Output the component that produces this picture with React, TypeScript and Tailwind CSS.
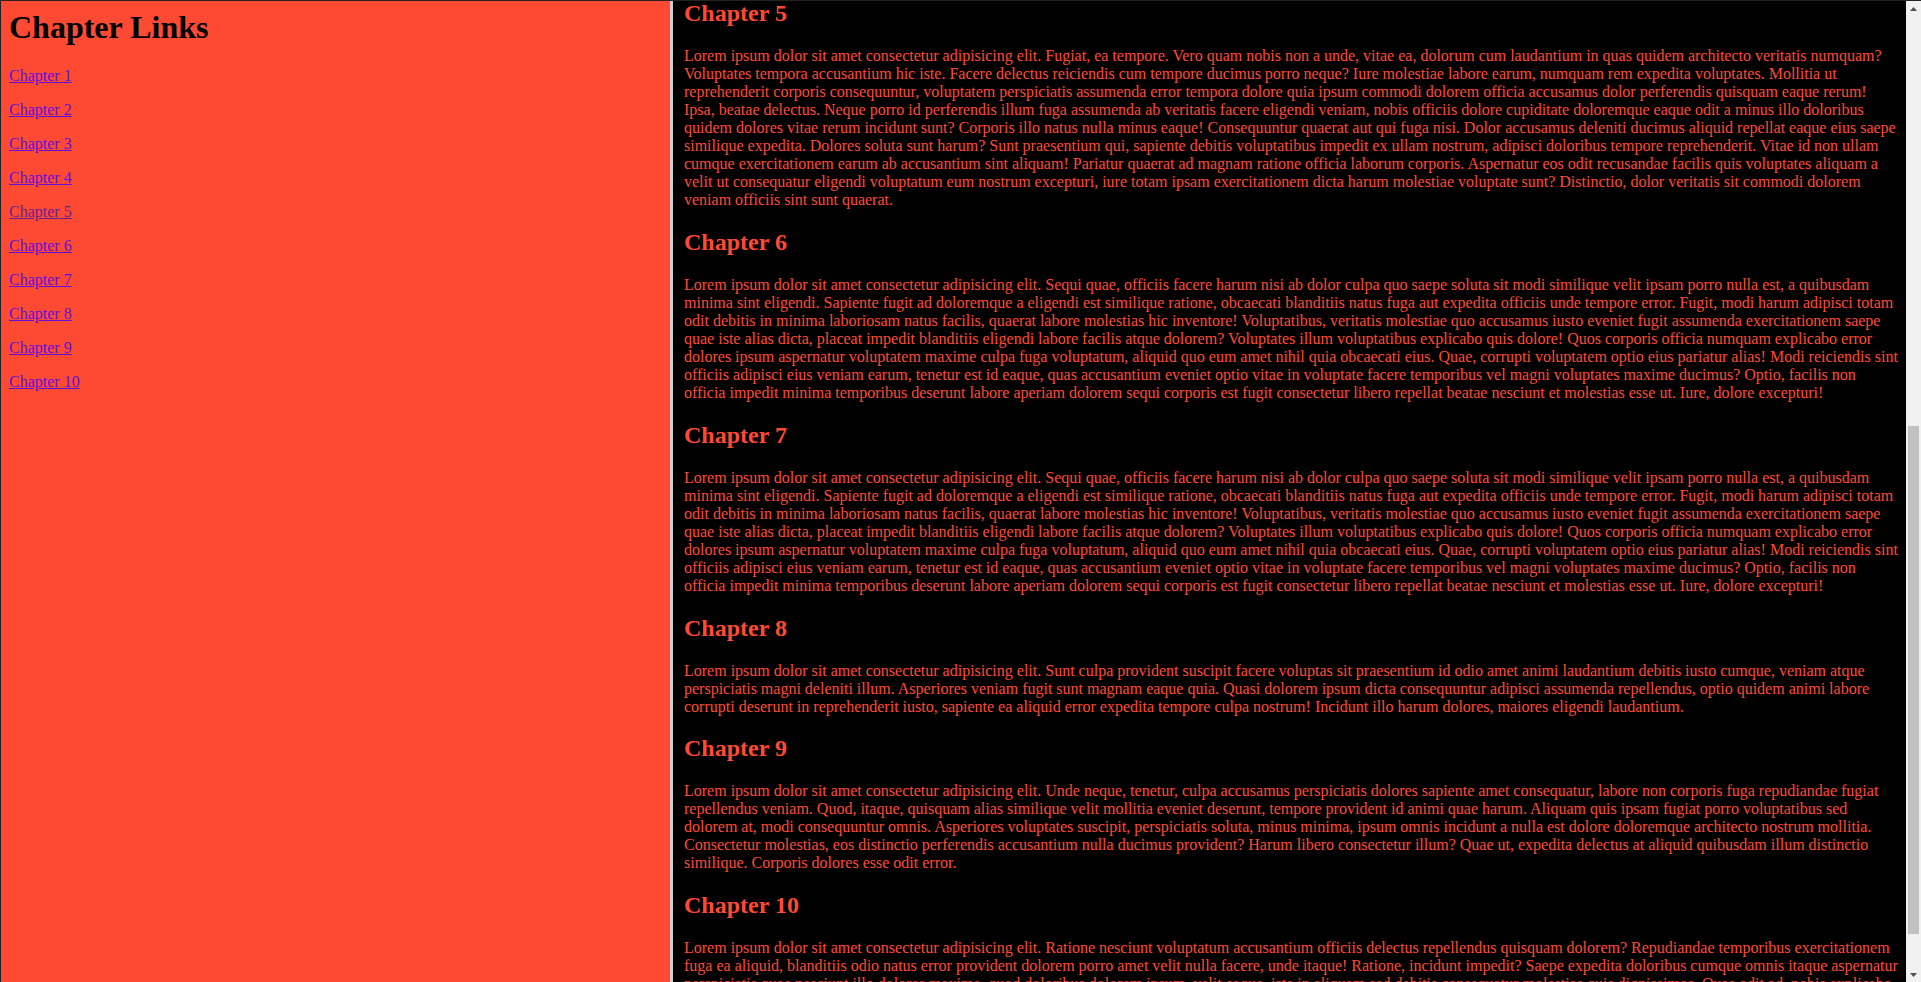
import { useEffect, useRef, useState } from 'react'

const textA =
  'Lorem ipsum dolor sit amet consectetur adipisicing elit. Fugiat, ea tempore. Vero quam nobis non a unde, vitae ea, dolorum cum laudantium in quas quidem architecto veritatis numquam? Voluptates tempora accusantium hic iste. Facere delectus reiciendis cum tempore ducimus porro neque? Iure molestiae labore earum, numquam rem expedita voluptates. Mollitia ut reprehenderit corporis consequuntur, voluptatem perspiciatis assumenda error tempora dolore quia ipsum commodi dolorem officia accusamus dolor perferendis quisquam eaque rerum! Ipsa, beatae delectus. Neque porro id perferendis illum fuga assumenda ab veritatis facere eligendi veniam, nobis officiis dolore cupiditate doloremque eaque odit a minus illo doloribus quidem dolores vitae rerum incidunt sunt? Corporis illo natus nulla minus eaque! Consequuntur quaerat aut qui fuga nisi. Dolor accusamus deleniti ducimus aliquid repellat eaque eius saepe similique expedita. Dolores soluta sunt harum? Sunt praesentium qui, sapiente debitis voluptatibus impedit ex ullam nostrum, adipisci doloribus tempore reprehenderit. Vitae id non ullam cumque exercitationem earum ab accusantium sint aliquam! Pariatur quaerat ad magnam ratione officia laborum corporis. Aspernatur eos odit recusandae facilis quis voluptates aliquam a velit ut consequatur eligendi voluptatum eum nostrum excepturi, iure totam ipsam exercitationem dicta harum molestiae voluptate sunt? Distinctio, dolor veritatis sit commodi dolorem veniam officiis sint sunt quaerat.'

const textB =
  'Lorem ipsum dolor sit amet consectetur adipisicing elit. Sequi quae, officiis facere harum nisi ab dolor culpa quo saepe soluta sit modi similique velit ipsam porro nulla est, a quibusdam minima sint eligendi. Sapiente fugit ad doloremque a eligendi est similique ratione, obcaecati blanditiis natus fuga aut expedita officiis unde tempore error. Fugit, modi harum adipisci totam odit debitis in minima laboriosam natus facilis, quaerat labore molestias hic inventore! Voluptatibus, veritatis molestiae quo accusamus iusto eveniet fugit assumenda exercitationem saepe quae iste alias dicta, placeat impedit blanditiis eligendi labore facilis atque dolorem? Voluptates illum voluptatibus explicabo quis dolore! Quos corporis officia numquam explicabo error dolores ipsum aspernatur voluptatem maxime culpa fuga voluptatum, aliquid quo eum amet nihil quia obcaecati eius. Quae, corrupti voluptatem optio eius pariatur alias! Modi reiciendis sint officiis adipisci eius veniam earum, tenetur est id eaque, quas accusantium eveniet optio vitae in voluptate facere temporibus vel magni voluptates maxime ducimus? Optio, facilis non officia impedit minima temporibus deserunt labore aperiam dolorem sequi corporis est fugit consectetur libero repellat beatae nesciunt et molestias esse ut. Iure, dolore excepturi!'

const textC =
  'Lorem ipsum dolor sit amet consectetur adipisicing elit. Sunt culpa provident suscipit facere voluptas sit praesentium id odio amet animi laudantium debitis iusto cumque, veniam atque perspiciatis magni deleniti illum. Asperiores veniam fugit sunt magnam eaque quia. Quasi dolorem ipsum dicta consequuntur adipisci assumenda repellendus, optio quidem animi labore corrupti deserunt in reprehenderit iusto, sapiente ea aliquid error expedita tempore culpa nostrum! Incidunt illo harum dolores, maiores eligendi laudantium.'

const textD =
  'Lorem ipsum dolor sit amet consectetur adipisicing elit. Unde neque, tenetur, culpa accusamus perspiciatis dolores sapiente amet consequatur, labore non corporis fuga repudiandae fugiat repellendus veniam. Quod, itaque, quisquam alias similique velit mollitia eveniet deserunt, tempore provident id animi quae harum. Aliquam quis ipsam fugiat porro voluptatibus sed dolorem at, modi consequuntur omnis. Asperiores voluptates suscipit, perspiciatis soluta, minus minima, ipsum omnis incidunt a nulla est dolore doloremque architecto nostrum mollitia. Consectetur molestias, eos distinctio perferendis accusantium nulla ducimus provident? Harum libero consectetur illum? Quae ut, expedita delectus at aliquid quibusdam illum distinctio similique. Corporis dolores esse odit error.'

const textE =
  'Lorem ipsum dolor sit amet consectetur adipisicing elit. Ratione nesciunt voluptatum accusantium officiis delectus repellendus quisquam dolorem? Repudiandae temporibus exercitationem fuga ea aliquid, blanditiis odio natus error provident dolorem porro amet velit nulla facere, unde itaque! Ratione, incidunt impedit? Saepe expedita doloribus cumque omnis itaque aspernatur perspiciatis quae nesciunt illo dolores maxime, quod doloribus dolorem ipsum, velit eaque, iste in aliquam sed debitis consequatur molestias quis dignissimos. Quas odit ad, nobis explicabo voluptatem assumenda tempore ipsa minus sint dolorum repellat officiis architecto laudantium porro itaque consequatur, rem enim quo. Nostrum harum ducimus, eveniet voluptates delectus sit iure fugiat rem quam recusandae soluta reprehenderit cupiditate.'

const chapters = [textA, textB, textB, textD, textA, textB, textB, textC, textD, textE]

function Arrow({ down }: { down?: boolean }) {
  return (
    <div className="flex h-[15px] items-center justify-center">
      <svg width="7" height="4" viewBox="0 0 7 4" className={down ? 'rotate-180' : ''}>
        <polygon points="3.5,0 7,4 0,4" fill="#505050" />
      </svg>
    </div>
  )
}

export default function App() {
  const panelRef = useRef<HTMLDivElement>(null)
  const targetRef = useRef<HTMLHeadingElement>(null)
  const trackRef = useRef<HTMLDivElement>(null)
  const [thumb, setThumb] = useState({ top: 0, height: 0 })

  useEffect(() => {
    const panel = panelRef.current
    const target = targetRef.current
    const track = trackRef.current
    if (!panel || !target || !track) return
    panel.scrollTop += target.getBoundingClientRect().top
    const len = track.clientHeight
    setThumb({
      top: (len * panel.scrollTop) / panel.scrollHeight,
      height: (len * panel.clientHeight) / panel.scrollHeight,
    })
  }, [])

  return (
    <div className="flex h-[982px] overflow-hidden border-t border-l border-[#222] font-['Liberation_Serif',serif]">
      <aside className="w-[669px] shrink-0 bg-[#ff4a33] p-2">
        <h1 className="mb-[21.44px] text-[32px] leading-[normal] font-bold text-black">Chapter Links</h1>
        {chapters.map((_, i) => (
          <p key={i} className="my-4 text-[16px] leading-[normal]">
            <a
              href={`#chapter-${i + 1}`}
              className={i === 4 ? 'text-[#6b1f8f] underline' : 'text-[#5f10d8] underline'}
            >
              Chapter {i + 1}
            </a>
          </p>
        ))}
      </aside>

      <div className="flex min-w-0 grow border-l-[3px] border-[#cfcfcf]">
        <main
          ref={panelRef}
          className="min-w-0 grow overflow-y-scroll bg-black pr-[6px] pl-[11px] text-[#ff4a33] [scrollbar-width:none]"
        >
          {chapters.map((text, i) => (
            <section key={i} id={`chapter-${i + 1}`}>
              <h2
                ref={i === 4 ? targetRef : undefined}
                className="my-[19.92px] text-[24px] leading-[normal] font-bold"
              >
                Chapter {i + 1}
              </h2>
              <p className="my-4 text-[16px] leading-[normal]">{text}</p>
            </section>
          ))}
        </main>

        <div className="flex w-[15px] shrink-0 flex-col bg-[#f1f1f1]">
          <Arrow />
          <div ref={trackRef} className="relative grow">
            <div
              className="absolute right-[2px] left-[2px] bg-[#c1c1c1]"
              style={{ top: thumb.top, height: thumb.height }}
            />
          </div>
          <Arrow down />
        </div>
      </div>
    </div>
  )
}
